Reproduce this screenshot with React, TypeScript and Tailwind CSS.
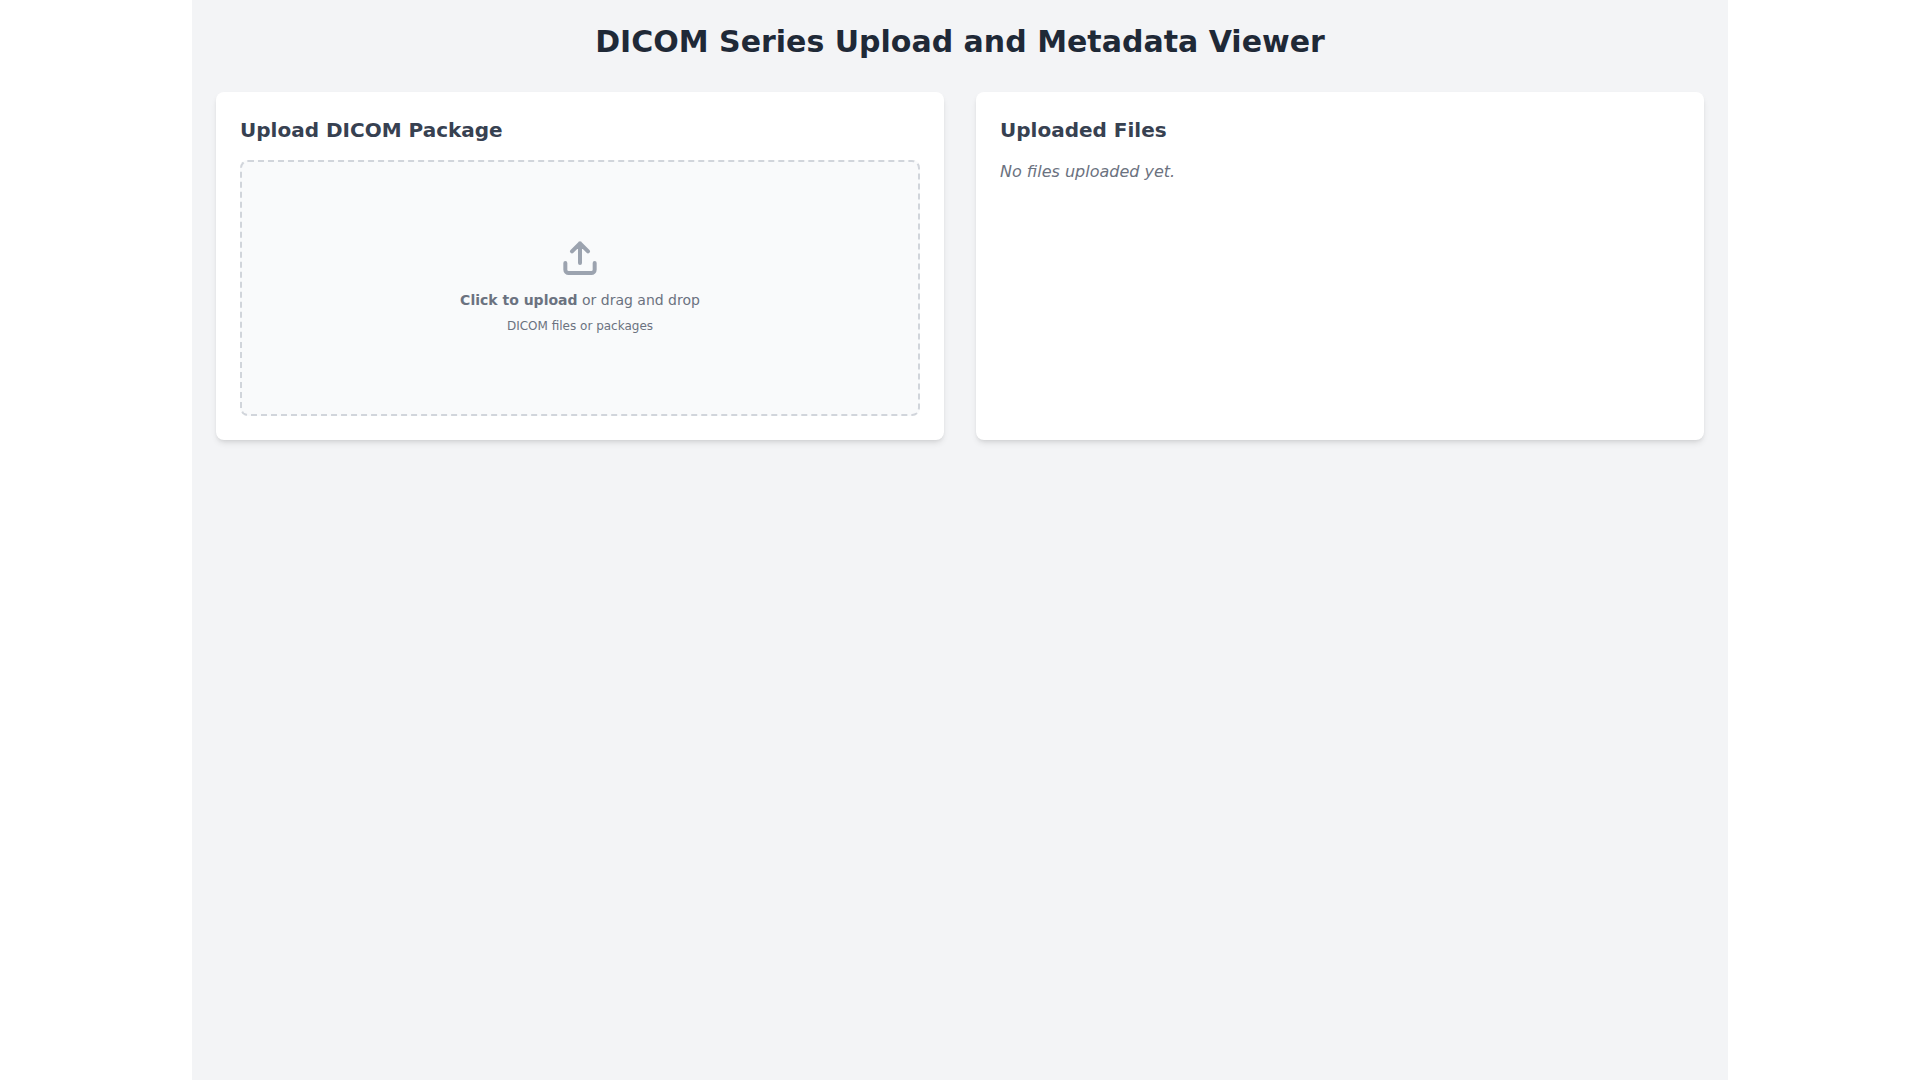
export default function App() {
  return (
    <div className="min-h-screen bg-white font-['DejaVu_Sans',sans-serif]">
      <div className="mx-auto min-h-screen w-[1536px] bg-[#f3f4f6] p-6">
        <h1 className="mb-8 text-center text-3xl font-bold text-[#1f2937]">DICOM Series Upload and Metadata Viewer</h1>
        <div className="grid grid-cols-2 gap-8">
          <div className="rounded-lg bg-white p-6 shadow-md">
            <h2 className="mb-4 text-xl font-semibold text-[#374151]">Upload DICOM Package</h2>
            <div className="flex h-64 flex-col items-center justify-center rounded-lg border-2 border-dashed border-[#d1d5db] bg-[#f9fafb] pt-5 pb-6">
              <svg className="mb-3 h-10 w-10 text-[#9ca3af]" fill="none" stroke="currentColor" viewBox="0 0 24 24">
                <path strokeLinecap="round" strokeLinejoin="round" strokeWidth="2.4" d="M3.2 15v4a2 2 0 002 2h13.6a2 2 0 002-2v-4M7.2 8L12 3.2l4.8 4.8M12 3.2V15" />
              </svg>
              <p className="mb-2 text-sm text-[#6b7280]"><span className="font-semibold">Click to upload</span> or drag and drop</p>
              <p className="text-xs text-[#6b7280]">DICOM files or packages</p>
            </div>
          </div>
          <div className="rounded-lg bg-white p-6 shadow-md">
            <h2 className="mb-4 text-xl font-semibold text-[#374151]">Uploaded Files</h2>
            <p className="italic text-[#6b7280]">No files uploaded yet.</p>
          </div>
        </div>
      </div>
    </div>
  );
}
